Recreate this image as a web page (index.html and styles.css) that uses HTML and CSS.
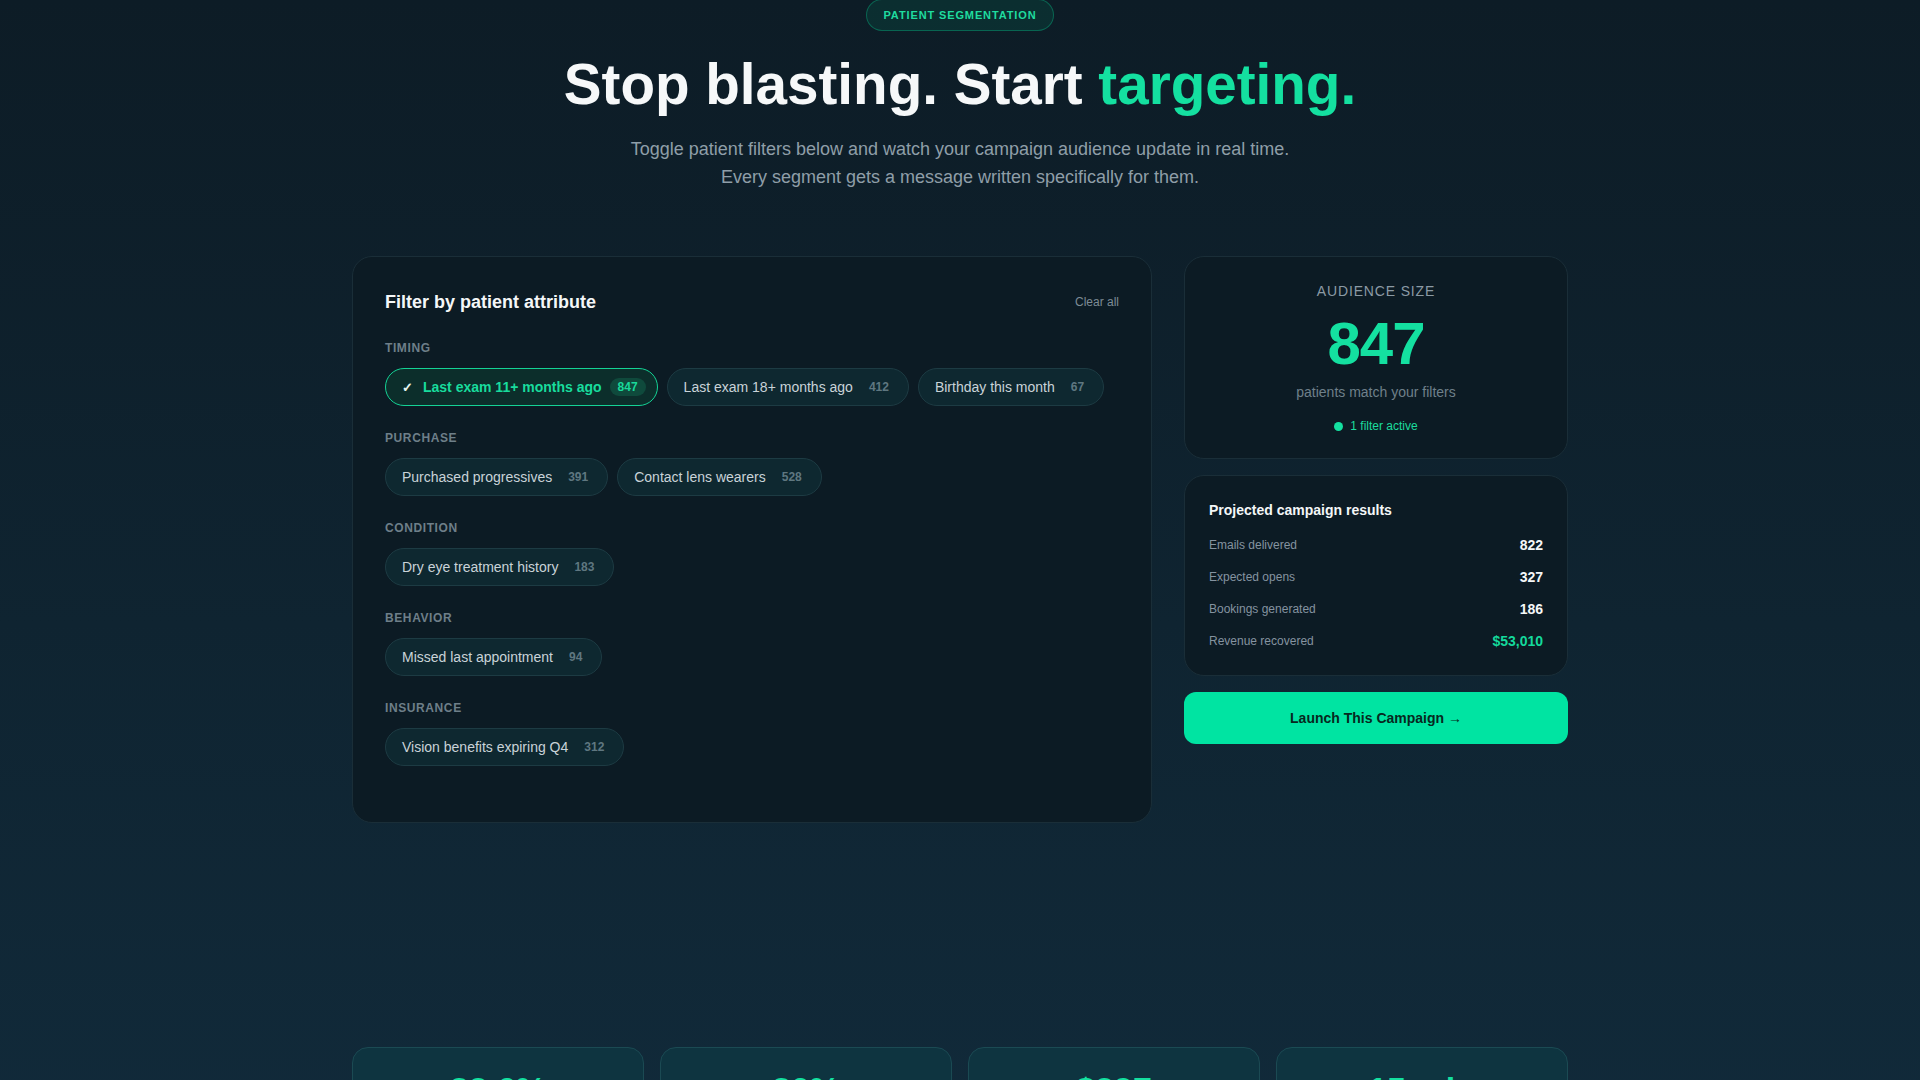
FILE: index.html
```html
<!DOCTYPE html>
<html lang="en">
<head>
<meta charset="utf-8">
<title>Patient Segmentation</title>
<link rel="stylesheet" href="styles.css">
</head>
<body>
<div class="page">
  <header class="hero">
    <span class="badge">PATIENT SEGMENTATION</span>
    <h1 class="title">Stop blasting. Start <span class="accent">targeting.</span></h1>
    <p class="subtitle">Toggle patient filters below and watch your campaign audience update in real time.<br>Every segment gets a message written specifically for them.</p>
  </header>

  <main class="main">
    <section class="panel">
      <div class="panel-head">
        <h2 class="panel-title">Filter by patient attribute</h2>
        <span class="clear">Clear all</span>
      </div>

      <div class="group">
        <div class="group-label">TIMING</div>
        <div class="chips">
          <button class="chip active"><span class="check">&#10003;</span>Last exam 11+ months ago<span class="count">847</span></button>
          <button class="chip">Last exam 18+ months ago<span class="count">412</span></button>
          <button class="chip">Birthday this month<span class="count">67</span></button>
        </div>
      </div>

      <div class="group">
        <div class="group-label">PURCHASE</div>
        <div class="chips">
          <button class="chip">Purchased progressives<span class="count">391</span></button>
          <button class="chip">Contact lens wearers<span class="count">528</span></button>
        </div>
      </div>

      <div class="group">
        <div class="group-label">CONDITION</div>
        <div class="chips">
          <button class="chip">Dry eye treatment history<span class="count">183</span></button>
        </div>
      </div>

      <div class="group">
        <div class="group-label">BEHAVIOR</div>
        <div class="chips">
          <button class="chip">Missed last appointment<span class="count">94</span></button>
        </div>
      </div>

      <div class="group">
        <div class="group-label">INSURANCE</div>
        <div class="chips">
          <button class="chip">Vision benefits expiring Q4<span class="count">312</span></button>
        </div>
      </div>
    </section>

    <aside class="side">
      <div class="card audience">
        <div class="aud-label">AUDIENCE SIZE</div>
        <div class="aud-num">847</div>
        <div class="aud-sub">patients match your filters</div>
        <div class="aud-active"><span class="dot"></span>1 filter active</div>
      </div>

      <div class="card results">
        <h3 class="results-title">Projected campaign results</h3>
        <div class="row"><span class="row-label">Emails delivered</span><span class="row-val">822</span></div>
        <div class="row"><span class="row-label">Expected opens</span><span class="row-val">327</span></div>
        <div class="row"><span class="row-label">Bookings generated</span><span class="row-val">186</span></div>
        <div class="row"><span class="row-label">Revenue recovered</span><span class="row-val green">$53,010</span></div>
      </div>

      <button class="launch">Launch This Campaign &rarr;</button>
    </aside>
  </main>

  <section class="stats">
    <div class="stat"><div class="stat-num">32.6%</div></div>
    <div class="stat"><div class="stat-num">30%</div></div>
    <div class="stat"><div class="stat-num">$297</div></div>
    <div class="stat"><div class="stat-num">15 min</div></div>
  </section>
</div>
</body>
</html>
```

FILE: styles.css
```css
* { box-sizing: border-box; }

html, body {
  margin: 0;
  padding: 0;
}

body {
  min-height: 100vh;
  background: linear-gradient(180deg, #0d1c26 0%, #0f2431 55%, #112a3a 100%);
  color: #e8eef1;
  font-family: "Liberation Sans", Arial, Helvetica, sans-serif;
  overflow: hidden;
}

.page {
  max-width: 1280px;
  margin: 0 auto;
  padding: 0 32px;
}

/* Hero */
.hero {
  display: flex;
  flex-direction: column;
  align-items: center;
  text-align: center;
}

.badge {
  display: inline-block;
  margin-top: -1px;
  padding: 8px 16px;
  line-height: 14px;
  font-size: 11px;
  font-weight: 700;
  letter-spacing: 0.08em;
  color: #1fdc9f;
  background: rgba(0, 229, 160, 0.09);
  border: 1px solid rgba(0, 229, 160, 0.3);
  border-radius: 999px;
}

.title {
  margin: 23px 0 0;
  font-size: 56.6px;
  line-height: 62px;
  font-weight: 700;
  letter-spacing: 0;
  color: #f6f8f9;
}

.accent { color: #14e0a0; }

.subtitle {
  margin: 19px 0 0;
  font-size: 18px;
  line-height: 28px;
  color: #8f9ea8;
}

/* Main grid */
.main {
  display: grid;
  grid-template-columns: 1fr 384px;
  gap: 32px;
  align-items: start;
  margin-top: 65px;
}

.panel {
  background: #0c1b24;
  border: 1px solid #1a2e38;
  border-radius: 20px;
  padding: 31px 32px 32px;
}

.panel-head {
  display: flex;
  justify-content: space-between;
  align-items: center;
  margin-bottom: 24px;
}

.panel-title {
  margin: 0;
  font-size: 18px;
  line-height: 28px;
  font-weight: 700;
  color: #f4f7f8;
}

.clear {
  font-size: 12px;
  color: #7d8c95;
}

.group { margin-bottom: 24px; }

.group-label {
  font-size: 12px;
  line-height: 16px;
  font-weight: 700;
  letter-spacing: 0.05em;
  color: #6e7f89;
  margin-bottom: 12px;
}

.chips {
  display: flex;
  flex-wrap: wrap;
  gap: 9px;
}

.chip {
  display: inline-flex;
  align-items: center;
  height: 38px;
  padding: 0 11px 0 16px;
  font-family: inherit;
  font-size: 14px;
  color: #c9d3d8;
  background: #0e2830;
  border: 1px solid #1d3b43;
  border-radius: 999px;
  cursor: pointer;
}

.chip .count {
  margin-left: 8px;
  padding: 2px 8px;
  font-size: 12px;
  line-height: 14px;
  font-weight: 700;
  color: #5f7780;
  border-radius: 10px;
}

.chip.active {
  font-weight: 700;
  color: #18dc9d;
  background: #0c2e2b;
  border-color: #14d295;
}

.chip.active .count {
  color: #19d99b;
  background: #0f4a3c;
}

.check {
  font-size: 13px;
  color: #e6f5ef;
  margin-right: 10px;
  font-weight: 700;
}

/* Side column */
.side {
  display: flex;
  flex-direction: column;
  gap: 16px;
}

.card {
  background: #0c1b24;
  border: 1px solid #1a2e38;
  border-radius: 20px;
}

.audience {
  padding: 24px 24px 24px;
  text-align: center;
}

.aud-label {
  font-size: 14px;
  line-height: 20px;
  letter-spacing: 0.06em;
  color: #8b9aa4;
}

.aud-num {
  margin-top: 10px;
  font-size: 60px;
  line-height: 66px;
  font-weight: 700;
  letter-spacing: -1px;
  color: #14e0a0;
}

.aud-sub {
  margin-top: 5px;
  font-size: 14px;
  line-height: 20px;
  color: #6f808a;
}

.aud-active {
  margin-top: 16px;
  display: flex;
  justify-content: center;
  align-items: center;
  gap: 7px;
  font-size: 12px;
  line-height: 16px;
  color: #1bdc9e;
}

.dot {
  width: 9px;
  height: 9px;
  border-radius: 50%;
  background: #14e0a0;
}

.results {
  padding: 23px 24px 18px;
}

.results-title {
  margin: 0 0 8px;
  font-size: 14px;
  line-height: 22px;
  font-weight: 700;
  color: #f4f7f8;
}

.row {
  display: flex;
  justify-content: space-between;
  align-items: center;
  padding: 6px 0;
  line-height: 20px;
}

.row-label {
  font-size: 12px;
  color: #8593a0;
}

.row-val {
  font-size: 14px;
  font-weight: 700;
  color: #f4f7f8;
}

.row-val.green { color: #14d99c; }

.launch {
  height: 52px;
  border: none;
  border-radius: 12px;
  background: #00e4a2;
  color: #072820;
  font-family: inherit;
  font-size: 14px;
  font-weight: 700;
  cursor: pointer;
}

/* Stats */
.stats {
  display: grid;
  grid-template-columns: repeat(4, 1fr);
  gap: 16px;
  margin-top: 224px;
}

.stat {
  background: #0e3440;
  border: 1px solid #1b4a53;
  border-radius: 16px;
  padding: 21px 20px 24px;
  text-align: center;
}

.stat-num {
  font-size: 34px;
  line-height: 40px;
  font-weight: 700;
  color: #14e0a0;
}
```
